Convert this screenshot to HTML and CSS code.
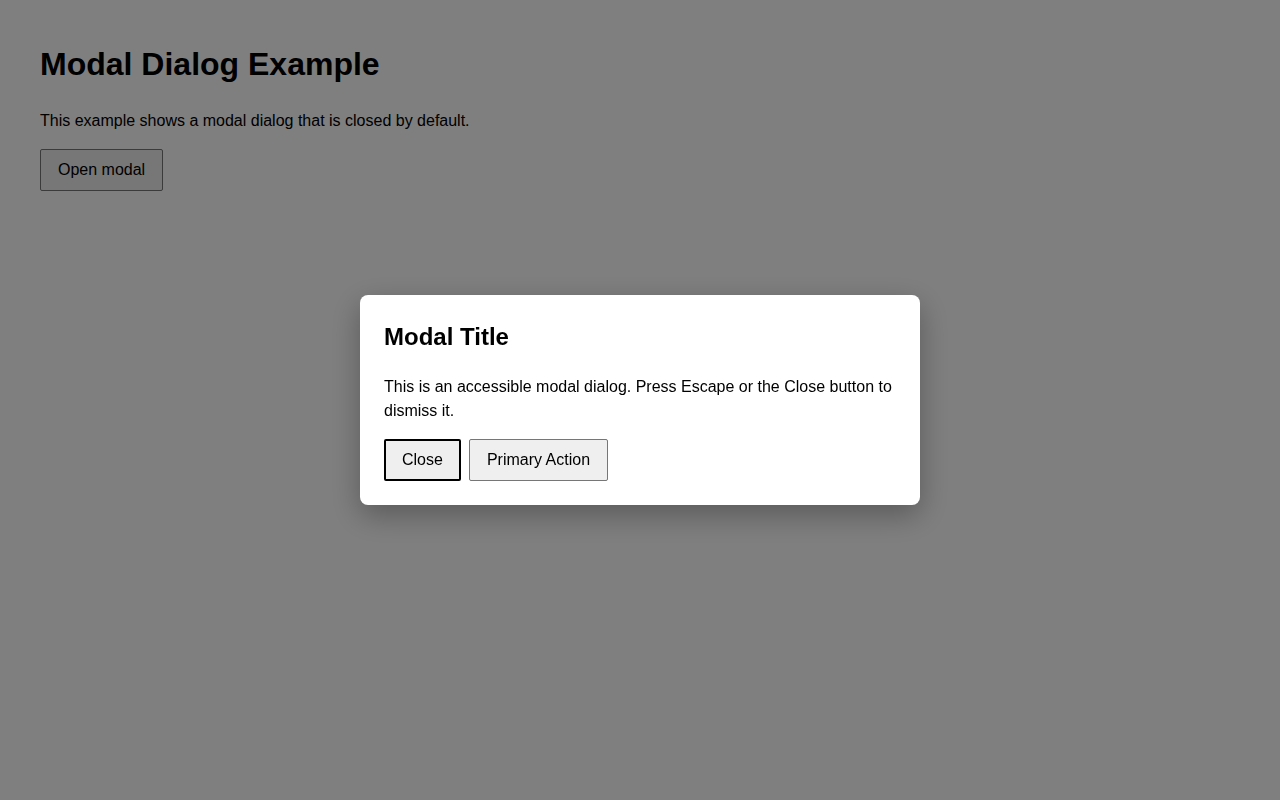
FILE: index.html
```html
<!DOCTYPE html>
<html>

<head>
  <title>Modal Dialog Example</title>
  <link rel="stylesheet" href="styles.css">
</head>

<body>
  <main class="page">
    <h1>Modal Dialog Example</h1>
    <p>This example shows a modal dialog that is closed by default.</p>
    <button class="btn" type="button">Open modal</button>
  </main>

  <div class="overlay">
    <div class="modal" role="dialog" aria-modal="true" aria-labelledby="modalTitle">
      <h2 id="modalTitle">Modal Title</h2>
      <p>This is an accessible modal dialog. Press Escape or the Close button to dismiss it.</p>
      <div class="actions">
        <button class="btn btn-focus" type="button">Close</button>
        <button class="btn" type="button">Primary Action</button>
      </div>
    </div>
  </div>
</body>

</html>
```

FILE: styles.css
```css
body {
  margin: 0;
  padding: 40px;
  font-family: "Liberation Sans", Arial, sans-serif;
  font-size: 16px;
  line-height: 1.5;
  color: #000;
  background: #fff;
}

h1 {
  margin: 0 0 21px;
  font-size: 32px;
}

.page p {
  margin: 0 0 16px;
}

.btn {
  font-family: inherit;
  font-size: 16px;
  line-height: 1.5;
  padding: 8px 17px;
  border: 1px solid #767676;
  border-radius: 2px;
  background: #efefef;
  color: #000;
}

.btn-focus {
  border: 2px solid #000;
  padding: 7px 16px;
}

.overlay {
  position: fixed;
  inset: 0;
  background: rgba(0, 0, 0, 0.5);
  display: flex;
  align-items: center;
  justify-content: center;
}

.modal {
  width: 512px;
  padding: 24px;
  background: #fff;
  border-radius: 8px;
  box-shadow: 0 10px 30px rgba(0, 0, 0, 0.3);
}

.modal h2 {
  margin: 0 0 20px;
  font-size: 24px;
}

.modal p {
  margin: 0 0 16px;
}

.actions {
  display: flex;
  gap: 8px;
}
```
